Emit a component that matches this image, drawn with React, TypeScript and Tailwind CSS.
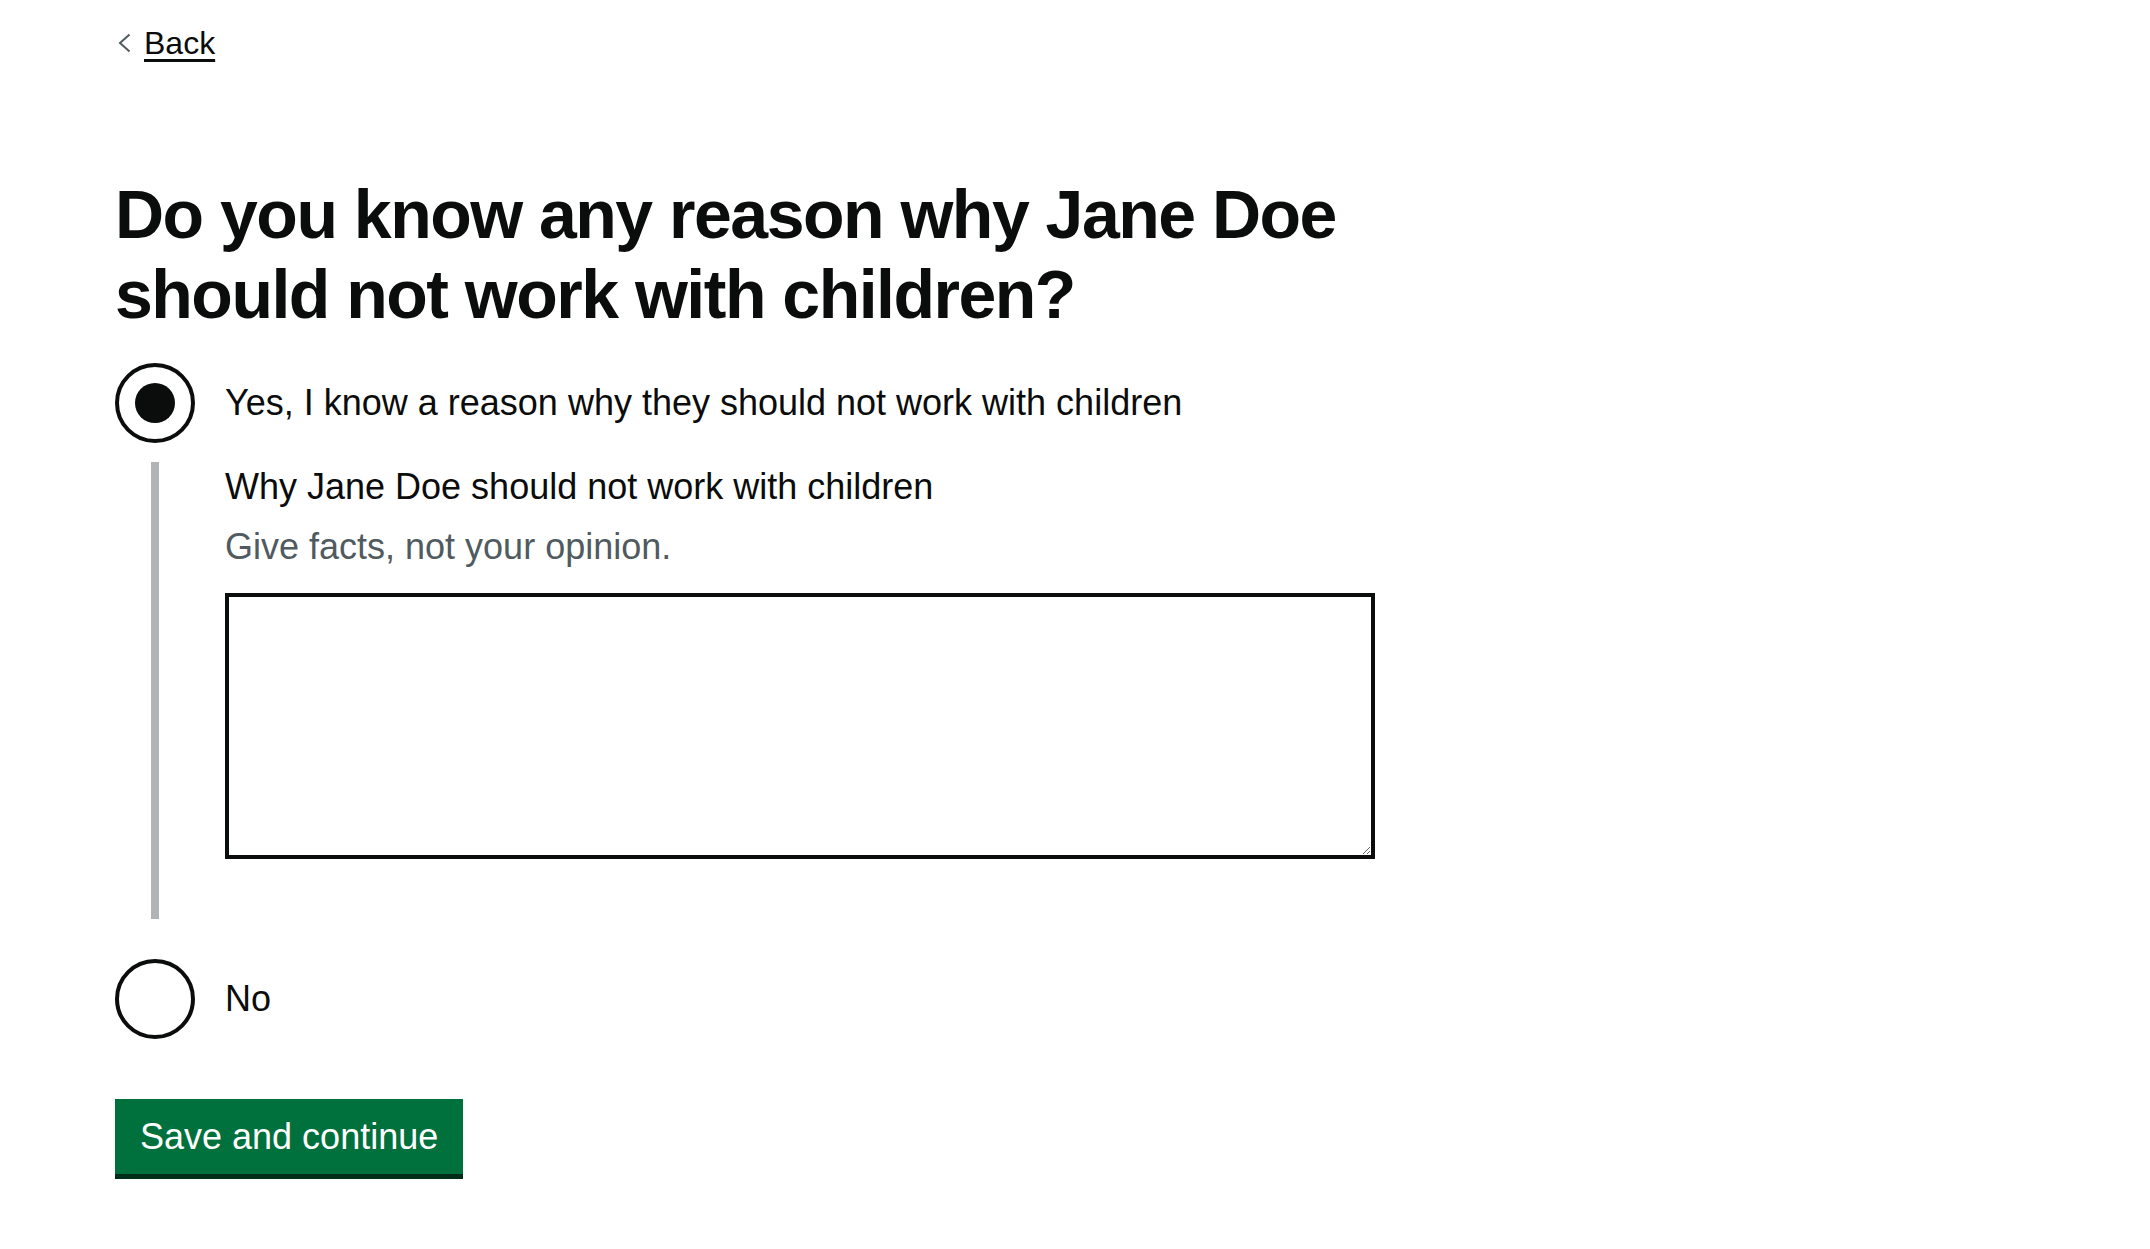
import { useState } from "react";

export default function App() {
    const [choice, setChoice] = useState<"yes" | "no">("yes");
    const [reason, setReason] = useState("");

    return (
        <div className="min-h-screen bg-white text-[#0b0c0c] font-['Liberation_Sans',Arial,sans-serif]">
            <div className="pl-[115px] pt-[23px] pb-[40px]">
                <a href="#" className="inline-flex items-center gap-[13px] text-[32px] leading-[40px] text-[#0b0c0c] underline decoration-[3px] underline-offset-[5px]">
                    <svg width="14" height="20" viewBox="0 0 14 20" className="shrink-0 ml-[2px]">
                        <polyline points="12.5,1.5 3,10 12.5,18.5" fill="none" stroke="#505a5f" strokeWidth="2" />
                    </svg>
                    Back
                </a>

                <div className="w-[1260px]">
                    <h1 className="mt-[111px] text-[68px] leading-[80px] font-bold tracking-[-1.5px]">
                        Do you know any reason why Jane Doe should not work with children?
                    </h1>

                    <div className="mt-[29px]">
                        <label className="flex items-center gap-[30px] cursor-pointer" onClick={() => setChoice("yes")}>
                            <span className="w-[80px] h-[80px] rounded-full border-4 border-[#0b0c0c] flex items-center justify-center shrink-0">
                                {choice === "yes" && <span className="w-[40px] h-[40px] rounded-full bg-[#0b0c0c]" />}
                            </span>
                            <span className="text-[36px] leading-[50px]">Yes, I know a reason why they should not work with children</span>
                        </label>

                        {choice === "yes" && (
                            <div className="ml-[36px] mt-[19px] border-l-8 border-[#b1b4b6] pl-[66px] pb-[60px]">
                                <label htmlFor="reason" className="block text-[36px] leading-[50px] mb-[10px]">
                                    Why Jane Doe should not work with children
                                </label>
                                <div className="text-[36px] leading-[50px] text-[#505a5f] mb-[21px]">
                                    Give facts, not your opinion.
                                </div>
                                <textarea
                                    id="reason"
                                    value={reason}
                                    onChange={(e) => setReason(e.target.value)}
                                    className="block w-[1150px] h-[266px] border-4 border-[#0b0c0c] p-[10px] text-[36px] leading-[50px] outline-none"
                                />
                            </div>
                        )}

                        <label className="mt-[40px] flex items-center gap-[30px] cursor-pointer" onClick={() => setChoice("no")}>
                            <span className="w-[80px] h-[80px] rounded-full border-4 border-[#0b0c0c] flex items-center justify-center shrink-0">
                                {choice === "no" && <span className="w-[40px] h-[40px] rounded-full bg-[#0b0c0c]" />}
                            </span>
                            <span className="text-[36px] leading-[50px]">No</span>
                        </label>
                    </div>

                    <button className="mt-[60px] h-[75px] px-[25px] bg-[#00703c] text-white text-[36px] leading-[50px] shadow-[0_5px_0_#002d18]">
                        Save and continue
                    </button>
                </div>
            </div>
        </div>
    );
}
